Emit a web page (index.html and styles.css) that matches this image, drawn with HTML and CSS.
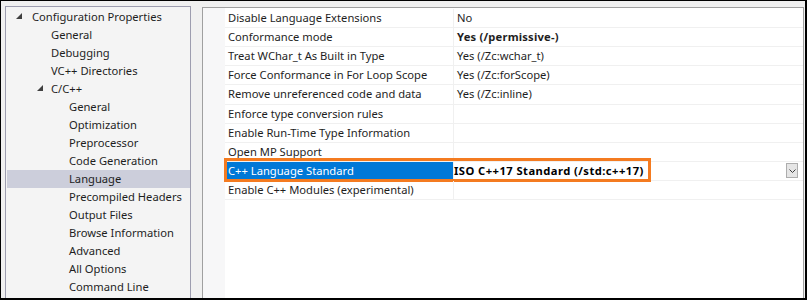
FILE: index.html
```html
<!DOCTYPE html>
<html lang="en">

<head>
  <meta charset="UTF-8">
  <meta name="viewport" content="width=device-width, initial-scale=1.0">
  <title>Property Pages</title>
  <link rel="stylesheet" href="styles.css">
</head>

<body>
  <div class="frame">
    <div class="tree">
      <div class="node lvl0"><span class="arrow"><svg width="6" height="6" viewBox="0 0 6 6"><path d="M6 0V6H0Z" fill="#404040"/></svg></span>Configuration Properties</div>
      <div class="node lvl1">General</div>
      <div class="node lvl1">Debugging</div>
      <div class="node lvl1">VC++ Directories</div>
      <div class="node lvl1 open"><span class="arrow"><svg width="6" height="6" viewBox="0 0 6 6"><path d="M6 0V6H0Z" fill="#404040"/></svg></span>C/C++</div>
      <div class="node lvl2">General</div>
      <div class="node lvl2">Optimization</div>
      <div class="node lvl2">Preprocessor</div>
      <div class="node lvl2">Code Generation</div>
      <div class="node lvl2 sel">Language</div>
      <div class="node lvl2">Precompiled Headers</div>
      <div class="node lvl2">Output Files</div>
      <div class="node lvl2">Browse Information</div>
      <div class="node lvl2">Advanced</div>
      <div class="node lvl2">All Options</div>
      <div class="node lvl2">Command Line</div>
    </div>

    <div class="grid-panel">
      <div class="gutter"></div>
      <div class="props">
        <div class="prop"><span class="pname">Disable Language Extensions</span><span class="pval">No</span></div>
        <div class="prop"><span class="pname">Conformance mode</span><span class="pval strong">Yes (/permissive-)</span></div>
        <div class="prop"><span class="pname">Treat WChar_t As Built in Type</span><span class="pval">Yes (/Zc:wchar_t)</span></div>
        <div class="prop"><span class="pname">Force Conformance in For Loop Scope</span><span class="pval">Yes (/Zc:forScope)</span></div>
        <div class="prop"><span class="pname">Remove unreferenced code and data</span><span class="pval">Yes (/Zc:inline)</span></div>
        <div class="prop"><span class="pname">Enforce type conversion rules</span><span class="pval"></span></div>
        <div class="prop"><span class="pname">Enable Run-Time Type Information</span><span class="pval"></span></div>
        <div class="prop"><span class="pname">Open MP Support</span><span class="pval"></span></div>
        <div class="prop active">
          <span class="pname">C++ Language Standard</span>
          <span class="pval strong edit">ISO C++17 Standard (/std:c++17)
            <span class="drop"><svg width="7" height="4" viewBox="0 0 7 4"><path d="M0.5 0.5L3.5 3.5L6.5 0.5" fill="none" stroke="#3c3c3c" stroke-width="1"/></svg></span>
          </span>
          <span class="focus-ring"></span>
        </div>
        <div class="prop"><span class="pname">Enable C++ Modules (experimental)</span><span class="pval"></span></div>
      </div>
    </div>
  </div>
</body>

</html>
```

FILE: styles.css
```css
body {
  margin: 0;
  background-color: #ffffff;
}

.frame {
  width: 807px;
  height: 300px;
  box-sizing: border-box;
  border: solid #000000;
  border-width: 1px 2px 2px 1px;
  background-color: #f0f0f0;
  display: flex;
  align-items: flex-start;
  overflow: hidden;
  font-family: "Noto Sans", "Open Sans", sans-serif;
  font-size: 11.2px;
  color: #1e1e1e;
}

/* left tree */
.tree {
  box-sizing: border-box;
  flex: none;
  width: 186px;
  height: 300px;
  margin: 5px 0 0 4px;
  padding: 1px 0 0 1px;
  border: 1px solid #9d9daf;
  border-bottom: 0;
  background-color: #f4f4f4;
}

.node {
  height: 18px;
  box-sizing: border-box;
  padding-bottom: 2px;
  display: flex;
  align-items: center;
  white-space: nowrap;
}

.node.sel {
  background-color: #cccedb;
}

.arrow {
  display: flex;
  flex: none;
}

.lvl0 {
  padding-left: 9px;
}

.lvl0 .arrow {
  width: 16px;
}

.lvl1 {
  padding-left: 44px;
}

.lvl1.open {
  padding-left: 30px;
}

.lvl1 .arrow {
  width: 14px;
}

.lvl2 {
  padding-left: 62px;
}

/* property grid */
.grid-panel {
  box-sizing: border-box;
  flex: none;
  width: 602px;
  height: 300px;
  margin: 6px 0 0 11px;
  border: 1px solid #a0a0a0;
  border-bottom: 0;
  background-color: #ffffff;
  display: flex;
}

.gutter {
  flex: none;
  width: 22px;
  background-color: #f7f7f8;
}

.props {
  flex: 1;
  padding-top: 0.875px;
}

.prop {
  position: relative;
  height: 19.125px;
  box-sizing: border-box;
  border-bottom: 1px solid #f0f0f0;
  display: flex;
  line-height: 18px;
  white-space: nowrap;
}

.pname {
  flex: none;
  width: 229px;
  box-sizing: border-box;
  padding-left: 3px;
  border-right: 1px solid #f0f0f0;
}

.pval {
  flex: 1;
  display: flex;
  align-items: center;
  padding-left: 3px;
}

.strong {
  font-weight: bold;
  letter-spacing: 0.2px;
}

.pval.edit {
  padding-left: 0;
  color: #000000;
  letter-spacing: 0.45px;
}

.prop.active .pname {
  background-color: #0078d7;
  color: #ffffff;
}

.drop {
  margin-left: auto;
  margin-right: 5px;
  width: 12px;
  height: 15px;
  box-sizing: border-box;
  border: 1px solid #adadad;
  background-color: #e5e5e5;
  display: flex;
  align-items: center;
  justify-content: center;
}

.focus-ring {
  position: absolute;
  left: -1px;
  top: -4px;
  width: 427px;
  height: 24px;
  box-sizing: border-box;
  border: 3px solid #f47b20;
  pointer-events: none;
}
```
